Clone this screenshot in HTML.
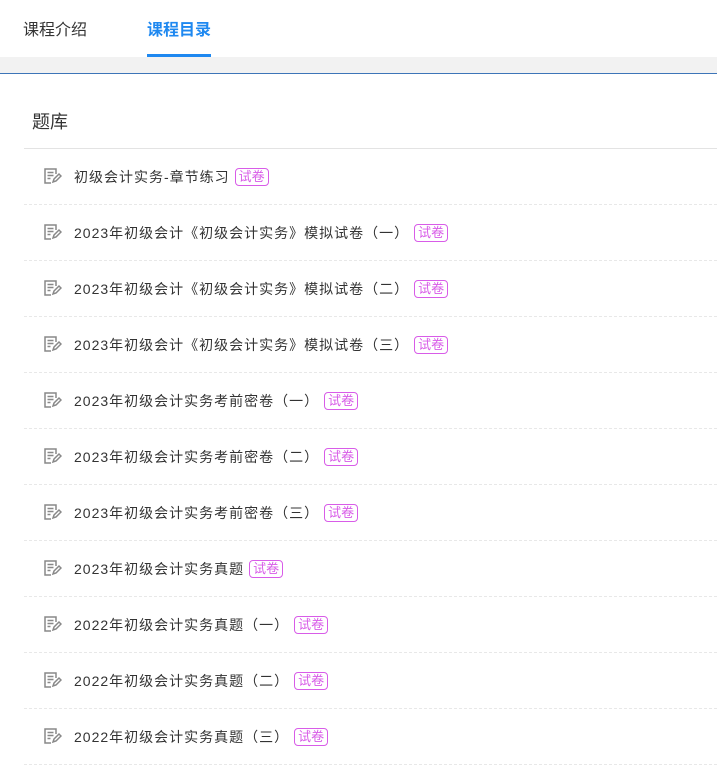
<!DOCTYPE html>
<html><head><meta charset="utf-8"><style>
body{margin:0;width:717px;height:717px;overflow:hidden;background:#fff;font-family:"Liberation Sans","Noto Sans CJK SC",sans-serif;}
.tabs{height:57px;position:relative;background:#fff}
.tab{position:absolute;top:20px;font-size:16px;color:#333;line-height:22px}
.tab.on{color:#1e88f0;font-weight:bold}
.ul{position:absolute;left:147px;top:54px;width:64px;height:3px;background:#1e88f0}
.band{height:16px;background:#f2f2f2}
.card{border-top:1px solid #3d75b8;height:700px;position:relative}
.title{position:absolute;left:32px;top:36px;font-size:18px;color:#333;line-height:24px}
.div{position:absolute;left:24px;right:0;top:74px;border-top:1px solid #e3e3e3}
.list{position:absolute;left:24px;right:0;top:75px}
.item{height:55px;border-bottom:1px dashed #e8e8e8;position:relative}
.item svg{position:absolute;left:20px;top:19px}
.item span.t{position:absolute;left:50px;top:18px;font-size:14px;color:#333;line-height:20px;letter-spacing:1px;white-space:nowrap}
.tag{display:inline-block;border:1px solid #d85ce8;color:#d85ce8;border-radius:4px;font-size:13px;line-height:16px;padding:0 3px;margin-left:5px;vertical-align:1px;letter-spacing:0}
</style></head><body>
<div class="tabs"><div class="tab" style="left:23px">课程介绍</div><div class="tab on" style="left:147px">课程目录</div><div class="ul"></div></div>
<div class="band"></div>
<div class="card">
<div class="title">题库</div><div class="div"></div>
<div class="list">
<script>
const items=["初级会计实务-章节练习","2023年初级会计《初级会计实务》模拟试卷（一）","2023年初级会计《初级会计实务》模拟试卷（二）","2023年初级会计《初级会计实务》模拟试卷（三）","2023年初级会计实务考前密卷（一）","2023年初级会计实务考前密卷（二）","2023年初级会计实务考前密卷（三）","2023年初级会计实务真题","2022年初级会计实务真题（一）","2022年初级会计实务真题（二）","2022年初级会计实务真题（三）"];
const ic='<svg width="18" height="16" viewBox="0 0 18 16" fill="none" stroke="#888" stroke-width="1.5"><path d="M12 6V1H1v14h6"/><path d="M3.5 4.5h6M3.5 7.5h6M3.5 10.5h3"/><path d="M9 14l1-3 5-5 2 2-5 5z"/></svg>';
for(const s of items)document.write('<div class="item">'+ic+'<span class="t">'+s+'<span class="tag">试卷</span></span></div>');
</script>
</div></div>
</body></html>
